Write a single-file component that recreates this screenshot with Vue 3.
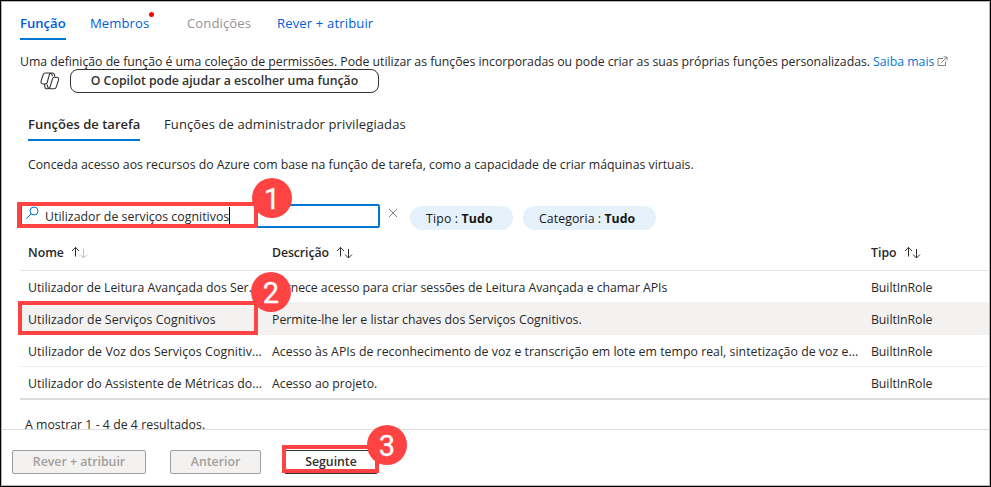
<script setup>
const wizardTabs = [
  { label: 'Função', cls: 'active' },
  { label: 'Membros', cls: 'members', dot: true },
  { label: 'Condições', cls: 'disabled' },
  { label: 'Rever + atribuir', cls: 'review' },
]
const roles = [
  { name: 'Utilizador de Leitura Avançada dos Ser...', desc: 'Fornece acesso para criar sessões de Leitura Avançada e chamar APIs', n: 'n1', d: 'd1' },
  { name: 'Utilizador de Serviços Cognitivos', desc: 'Permite-lhe ler e listar chaves dos Serviços Cognitivos.', selected: true, n: 'n2', d: 'd2' },
  { name: 'Utilizador de Voz dos Serviços Cognitiv...', desc: 'Acesso às APIs de reconhecimento de voz e transcrição em lote em tempo real, sintetização de voz e...', n: 'n3', d: 'd3' },
  { name: 'Utilizador do Assistente de Métricas do...', desc: 'Acesso ao projeto.', n: 'n4', d: 'd4' },
]
const columns = [
  { label: 'Nome', cls: 'h-name', half: true },
  { label: 'Descrição', cls: 'h-desc' },
  { label: 'Tipo', cls: 'h-type' },
]
</script>

<template>
  <div class="page">
    <main class="content">
      <nav class="wizard-tabs">
        <a v-for="t in wizardTabs" :key="t.label" class="wizard-tab" :class="t.cls">
          <span>{{ t.label }}</span><i v-if="t.dot" class="dot"></i>
        </a>
      </nav>

      <p class="intro">
        <span class="intro-text">Uma definição de função é uma coleção de permissões. Pode utilizar as funções incorporadas ou pode criar as suas próprias funções personalizadas.</span>
        <a class="more">Saiba mais</a>
        <svg class="external" viewBox="0 0 11 11" width="11" height="11">
          <path d="M6 2.5H1v7h7.5V5.5M4.5 6.5 9.8 1.2M6.5 1H10v3.5" />
        </svg>
      </p>

      <div class="copilot">
        <svg class="copilot-icon" viewBox="0 0 20 18" width="20" height="18">
          <path d="M12.6 4.2 11.8 2.4Q11.2 1 9.7 1H5.5Q3.7 1 3.1 2.8L1.2 8.7Q.4 12 3.3 12H5.2Q6.7 12 7.2 10.5L9.2 3.2Q9.7 1 11 1H12.5Q14 1 14.4 2.4L14.9 4.6" />
          <path d="M7.2 12.7 7.8 15.1Q8.2 16.8 10 16.8H14.1Q15.7 16.8 16.3 14.8L18.5 8.2Q19.3 5.3 16.3 5.3H14.5Q13 5.3 12.5 6.8L10.2 14.6Q9.6 16.8 8 16.8H6.9Q5.3 16.8 5 15.3L4.5 12.2" />
        </svg>
        <button class="copilot-btn"><span>O Copilot pode ajudar a escolher uma função</span></button>
      </div>

      <nav class="role-tabs">
        <a class="role-tab current"><span>Funções de tarefa</span></a>
        <a class="role-tab other"><span>Funções de administrador privilegiadas</span></a>
      </nav>
      <p class="hint"><span>Conceda acesso aos recursos do Azure com base na função de tarefa, como a capacidade de criar máquinas virtuais.</span></p>

      <div class="filters">
        <div class="search">
          <svg class="magnifier" viewBox="0 0 14 14" width="14" height="14">
            <circle cx="8" cy="5" r="4" /><path d="M5.2 7.8.3 12.7" />
          </svg>
          <span class="query">Utilizador de serviços cognitivos</span><i class="caret"></i>
          <div class="mark mark-search"></div>
          <b class="step step-1">1</b>
        </div>
        <svg class="clear" viewBox="0 0 10 10" width="10" height="10"><path d="M1 1 9 9M9 1 1 9" /></svg>
        <div class="pill type"><span>Tipo : <b>Tudo</b></span></div>
        <div class="pill category"><span>Categoria : <b>Tudo</b></span></div>
      </div>

      <section class="table">
        <div class="row head">
          <div v-for="c in columns" :key="c.label" class="cell" :class="c.cls">
            <span>{{ c.label }}</span>
            <svg class="sort" :class="{ half: c.half }" viewBox="0 0 17 13" width="17" height="13">
              <path d="M4.5 10.5V1.5M1 5 4.5 1.3 8 5" />
              <path class="down" d="M12.5 3V12M9 8.5 12.5 12 16 8.5" />
            </svg>
          </div>
        </div>
        <div v-for="r in roles" :key="r.name" class="row" :class="{ selected: r.selected }">
          <div class="cell"><span :class="r.n">{{ r.name }}</span></div>
          <div class="cell"><span :class="r.d">{{ r.desc }}</span></div>
          <div class="cell"><span class="kind">BuiltInRole</span></div>
          <template v-if="r.selected">
            <div class="mark mark-role"></div>
            <b class="step step-2">2</b>
          </template>
        </div>
      </section>
      <p class="count"><span>A mostrar 1 - 4 de 4 resultados.</span></p>
    </main>

    <footer class="footer">
      <button class="btn off review-btn"><span>Rever + atribuir</span></button>
      <button class="btn off prev-btn"><span>Anterior</span></button>
      <button class="btn next-btn">
        <span>Seguinte</span>
        <i class="mark mark-next"></i>
        <b class="step step-3">3</b>
      </button>
    </footer>
  </div>
</template>

<style>
body { margin: 0; background: #fff; overflow: hidden; }
</style>

<style scoped>
* { box-sizing: border-box; }
.page {
  width: 991px;
  height: 487px;
  display: flex;
  flex-direction: column;
  border: 1px solid #000;
  box-shadow: inset 0 0 0 1px #b8b8b8;
  background: #fff;
  color: #292827;
  font: 12.3px/20px "Open Sans", "Noto Sans", sans-serif;
  white-space: nowrap;
}
p { margin: 0; }
svg { fill: none; stroke: #323130; flex: none; }
.content { height: 428px; overflow: hidden; padding-left: 19px; margin-right: 1px; }

.wizard-tabs { display: flex; height: 39px; font-size: 13.1px; color: #015cda; }
.wizard-tab { display: flex; position: relative; padding-top: 12px; height: 39px; margin-right: 24px; }
.active { font-weight: 600; border-bottom: 2px solid #0078d4; width: 46px; }
.members { width: 73px; letter-spacing: .08px; }
.disabled { color: #959493; width: 66px; letter-spacing: .1px; }
.review { letter-spacing: .13px; }
.dot { position: absolute; left: 59px; top: 11px; width: 5px; height: 5px; border-radius: 50%; background: #f00; }

.intro { display: flex; height: 28px; padding-top: 12px; }
.intro-text { width: 853px; letter-spacing: -.027px; }
.more { color: #0078d4; width: 64px; }
.external { margin-top: 4px; stroke: #777; stroke-width: .9; }

.copilot { display: flex; height: 25px; padding-left: 20px; align-items: center; }
.copilot-icon { stroke-width: 1.1; }
.copilot-btn {
  width: 309px; height: 24px; margin-left: 10px; padding: 0;
  border: 1px solid #323130; border-radius: 8px; background: #fff;
  font: 600 12.3px/20px "Open Sans", sans-serif; color: #323130;
}

.role-tabs { display: flex; padding: 21px 0 0 8px; height: 48px; gap: 24px; font-size: 13px; }
.role-tab { height: 27px; line-height: 20px; }
.current { width: 112px; font-weight: 600; border-bottom: 2px solid #0078d4; letter-spacing: .02px; }
.other { letter-spacing: .11px; }
.hint { height: 63px; padding: 14px 0 0 8px; letter-spacing: -.01px; }

.filters { display: flex; height: 31px; }
.search { position: relative; display: flex; width: 360px; height: 24px; border: 2px solid #0078d4; border-radius: 2px; padding-left: 4px; }
.magnifier { stroke: #0078d4; stroke-width: 1; }
.query { margin-left: 5px; padding-top: 1px; letter-spacing: .04px; }
.caret { position: absolute; left: 207px; top: 1px; width: 1px; height: 17px; background: #000; }
.clear { margin: 4px 12px 0 8px; stroke: #777; stroke-width: .9; }
.pill { height: 24px; margin: 2px 10px 0 0; padding-left: 16px; line-height: 26px; border-radius: 12px; background: #e5f1fb; color: #161514; }
.type { width: 103px; letter-spacing: .16px; }
.category { width: 133px; letter-spacing: .07px; }
.pill b { font-weight: 700; }

.row { position: relative; display: grid; grid-template-columns: 244px 599px 1fr; height: 32px; padding-left: 8px; align-items: center; }
.cell { display: flex; align-items: center; padding-top: 2px; }
.row.head { height: 36px; font-weight: 600; border-bottom: 1px solid #e6e5e4; }
.head .cell { padding-top: 0; }
.h-desc { letter-spacing: -.09px; }
.row:nth-child(4) { border-bottom: 1px solid #f0efee; }
.row:last-child { border-bottom: 2px solid #dddcdb; height: 33px; }
.selected { background: #f3f2f1; box-shadow: 0 -1px #f3f2f1; }
.n2 { letter-spacing: .06px; }
.n3 { letter-spacing: .1px; }
.n4 { letter-spacing: .03px; }
.d1 { letter-spacing: -.045px; }
.d2 { letter-spacing: .015px; }
.d3 { letter-spacing: .03px; }
.kind { letter-spacing: -.07px; }
.sort { margin-left: 7px; }
.half .down { stroke: #c0bfbe; }
.count { padding: 15px 0 0 5px; letter-spacing: .03px; }

.footer { display: flex; flex: 1; padding: 20px 0 0 10px; margin: 0 1px 1px; border-top: 1px solid #dedddc; background: #fff; }
.btn { position: relative; height: 24px; padding: 0; border: 1px solid #323130; border-radius: 2px; background: #fff; color: #323130; font: 600 12.3px/20px "Open Sans", sans-serif; }
.off { background: #f3f2f1; border-color: #a19f9d; color: #a19f9d; }
.review-btn { width: 134px; margin-right: 24px; }
.prev-btn { width: 91px; margin-right: 23px; }
.next-btn { width: 94px; }

.mark { position: absolute; border: 4px solid #ff4343; }
.mark-search { left: -5px; top: -4px; width: 241px; height: 26px; }
.mark-role { left: -2px; top: -2px; width: 240px; height: 34px; }
.mark-next { left: -3px; top: -6px; width: 97px; height: 28px; }
.step {
  position: absolute; width: 40px; height: 40px; border-radius: 50%; background: #ff4343; color: #fff; z-index: 2;
  font: 400 29px/42px Roboto, "Liberation Sans", sans-serif; text-align: center; -webkit-text-stroke: .3px #fff;
}
.step-1 { left: 230px; top: -28px; }
.step-2 { left: 231px; top: -31px; }
.step-3 { left: 82px; top: -26px; }
</style>
